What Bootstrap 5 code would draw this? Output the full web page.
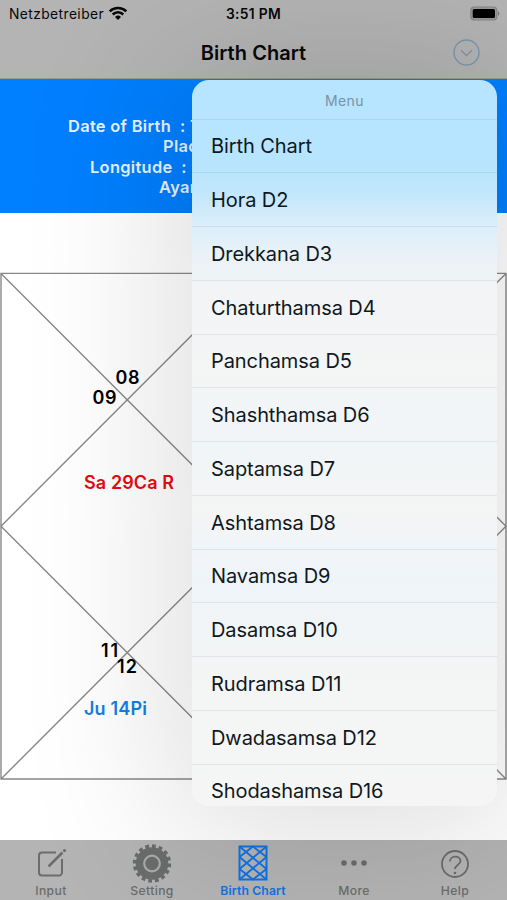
<!DOCTYPE html>
<html lang="en">
<head>
<meta charset="utf-8">
<meta name="viewport" content="width=device-width, initial-scale=1">
<title>Birth Chart</title>
<link href="https://cdn.jsdelivr.net/npm/bootstrap@5.3.0/dist/css/bootstrap.min.css" rel="stylesheet">
<style>
body{font-family:Inter,"Liberation Sans",sans-serif;background:#fff;color:#080808;line-height:1.2}
.screen{width:507px;height:900px}
.topbar{height:79px;background:#b4b4b4;border-bottom:1px solid #999}
.status{height:28px;font-size:13.8px;padding:0 7px 0 9px}
.carrier{letter-spacing:.42px}
.clock{letter-spacing:.25px;padding-right:2px}
.clock span{margin-left:4px}
.side{width:150px}
.titlebar{height:49px;padding:0 27px;font-size:20px;letter-spacing:.05px}
.info{height:134px;background:#007fff;color:#e9f4ff;font-size:16.4px;font-weight:600;line-height:20.4px;padding-top:37px}
.info div{white-space:pre;letter-spacing:.32px}
.l1{padding-left:68px}.l2{padding-left:163px}.l3{padding-left:90px}.l4{padding-left:159px}
.chart-area{padding-top:59px;height:627px}
.chart-area text{font-weight:600;font-size:18px}
.tabs{height:60px;background:#b4b4b4;color:#6b6d6d;font-size:12.2px;font-weight:500;padding-top:4px}
.tabs svg{width:40px;height:40px}
.tab-item{width:101px;letter-spacing:.38px;padding-left:1px}
.tab-on{color:#0d73e4;font-weight:600;letter-spacing:.12px}
.menu-pop{left:192px;top:80px;width:305px;height:725.5px;border-radius:17px;background:linear-gradient(#b7e4ff 0,#b7e4ff 80px,#c0e6fc 110px,#dbeefa 145px,#eaf2f7 175px,#f3f4f5 215px,#f4f5f5 290px,#f1f5f8 350px,#f4f5f5 430px,#eff4f8 500px,#f4f5f5 600px,#f5f5f5);box-shadow:0 8px 150px 25px rgba(0,0,0,.135)}
.menu-title{height:38.6px;font-size:14px;color:#7893a6;letter-spacing:.35px;padding-top:4px}
.menu-row{height:53.75px;flex:none;font-size:20px;color:#10181d;padding-left:19px;padding-top:1px;border-top:1.6px solid rgba(80,115,135,.12);letter-spacing:-.08px;white-space:nowrap}
</style>
<script src="https://cdn.jsdelivr.net/npm/bootstrap@5.3.0/dist/js/bootstrap.bundle.min.js"></script>
</head>
<body>
<div class="screen position-relative overflow-hidden">
  <header class="topbar">
    <div class="status d-flex align-items-center justify-content-between">
      <div class="side d-flex align-items-center">
        <span class="carrier">Netzbetreiber</span>
        <svg class="ms-1" width="20" height="15" viewBox="0 0 20 15" fill="none" stroke="#080808" stroke-width="2.5"><path d="M1.7 5.3a11.8 11.8 0 0 1 16.6 0M4.7 8.5a7.5 7.5 0 0 1 10.6 0"/><path d="M10 14l-3-3.1a4.3 4.3 0 0 1 6 0z" fill="#080808" stroke="none"/></svg>
      </div>
      <div class="clock fw-semibold">3:51<span>PM</span></div>
      <div class="side d-flex justify-content-end">
        <svg width="30" height="16" viewBox="0 0 30 16"><rect x=".8" y="1" width="26" height="13" rx="3.5" fill="#999" stroke="#858585" stroke-width="1.2"/><rect x="2.7" y="3" width="22.3" height="9" rx="1.5" fill="#000"/><path d="M28 5q2.600 2.500 0 5z" fill="#777"/></svg>
      </div>
    </div>
    <div class="titlebar d-flex align-items-center justify-content-between">
      <span class="side"></span>
      <span class="fw-semibold">Birth Chart</span>
      <span class="side d-flex justify-content-end"><svg width="27" height="27" viewBox="0 0 27 27" fill="none" stroke="#7895ae" stroke-width="1.3"><circle cx="13.5" cy="13.5" r="12.5"/><path d="M8 11.3l5.500 5.200 5.500-5.200"/></svg></span>
    </div>
  </header>
  <section class="info">
    <div class="l1">Date of Birth  : T</div>
    <div class="l2">Place</div>
    <div class="l3">Longitude  :</div>
    <div class="l4">Ayan</div>
  </section>
  <main class="chart-area">
    <svg class="d-block" width="507" height="510" viewBox="0 0 507 510">
      <path fill="none" stroke="#888" stroke-width="1.4" d="M1 1.4H506V507H1ZM1 1.4L506 507M506 1.4L1 507M253.5 1.4L506 254.2L253.5 507L1 254.2Z"/>
      <text x="115.5" y="112" textLength="24">08</text>
      <text x="92.5" y="131.500" textLength="24">09</text>
      <text x="84" y="217" textLength="90" fill="#e80c10">Sa 29Ca R</text>
      <text x="101" y="384.500" textLength="17">11</text>
      <text x="117" y="400.500" textLength="20">12</text>
      <text x="84" y="443" textLength="63" fill="#1480e8">Ju 14Pi</text>
    </svg>
  </main>
  <nav class="tabs d-flex text-center">
    <div class="tab-item"><svg viewBox="0 0 40 40" fill="none" stroke="currentColor" stroke-width="2"><path d="M25 8.500H11a3 3 0 0 0-3 3V28.500a3 3 0 0 0 3 3H28a3 3 0 0 0 3-3V15"/><path d="M17.500 22.500L31.500 8.500" stroke-width="2.500"/><circle cx="33.500" cy="6.500" r="1.600" fill="currentColor" stroke="none"/></svg><div>Input</div></div>
    <div class="tab-item"><svg viewBox="0 0 40 40"><circle cx="20" cy="19.500" r="16.300" fill="currentColor"/><circle cx="20" cy="19.500" r="17.300" fill="none" stroke="currentColor" stroke-width="3.800" pathLength="160" stroke-dasharray="5.600 4.400"/><circle cx="20" cy="19.500" r="7.800" fill="none" stroke="#aaa" stroke-width="2.200"/></svg><div>Setting</div></div>
    <div class="tab-item tab-on"><svg viewBox="0 0 40 40" fill="none" stroke="currentColor" stroke-width="2"><path d="M6.500 2.500H33.500V35.500H6.500Z"/><path d="M6.500 2.500L33.500 25M33.500 2.500L6.500 25M6.500 13L33.500 35.500M33.500 13L6.500 35.500M6.500 13L20 2.500L33.500 13M6.500 25L20 35.500L33.500 25" stroke-width="1.800"/></svg><div>Birth Chart</div></div>
    <div class="tab-item"><svg viewBox="0 0 40 40" fill="currentColor"><circle cx="10" cy="19" r="2.800"/><circle cx="20" cy="19" r="2.800"/><circle cx="30" cy="19" r="2.800"/></svg><div>More</div></div>
    <div class="tab-item"><svg viewBox="0 0 40 40" fill="none" stroke="currentColor" stroke-width="1.800"><circle cx="20" cy="20" r="13"/><path d="M15 17.500c0-6.500 10.500-6.500 10.500-.5 0 4-5.500 4-5.500 8"/><circle cx="20" cy="29" r="1.300" fill="currentColor" stroke="none"/></svg><div>Help</div></div>
  </nav>
  <div class="menu-pop position-absolute overflow-hidden d-flex flex-column">
    <div class="menu-title d-flex align-items-center justify-content-center flex-shrink-0">Menu</div>
    <div class="menu-row d-flex align-items-center">Birth Chart</div>
    <div class="menu-row d-flex align-items-center">Hora D2</div>
    <div class="menu-row d-flex align-items-center">Drekkana D3</div>
    <div class="menu-row d-flex align-items-center">Chaturthamsa D4</div>
    <div class="menu-row d-flex align-items-center">Panchamsa D5</div>
    <div class="menu-row d-flex align-items-center">Shashthamsa D6</div>
    <div class="menu-row d-flex align-items-center">Saptamsa D7</div>
    <div class="menu-row d-flex align-items-center">Ashtamsa D8</div>
    <div class="menu-row d-flex align-items-center">Navamsa D9</div>
    <div class="menu-row d-flex align-items-center">Dasamsa D10</div>
    <div class="menu-row d-flex align-items-center">Rudramsa D11</div>
    <div class="menu-row d-flex align-items-center">Dwadasamsa D12</div>
    <div class="menu-row d-flex align-items-center">Shodashamsa D16</div>
  </div>
</div>
</body>
</html>
